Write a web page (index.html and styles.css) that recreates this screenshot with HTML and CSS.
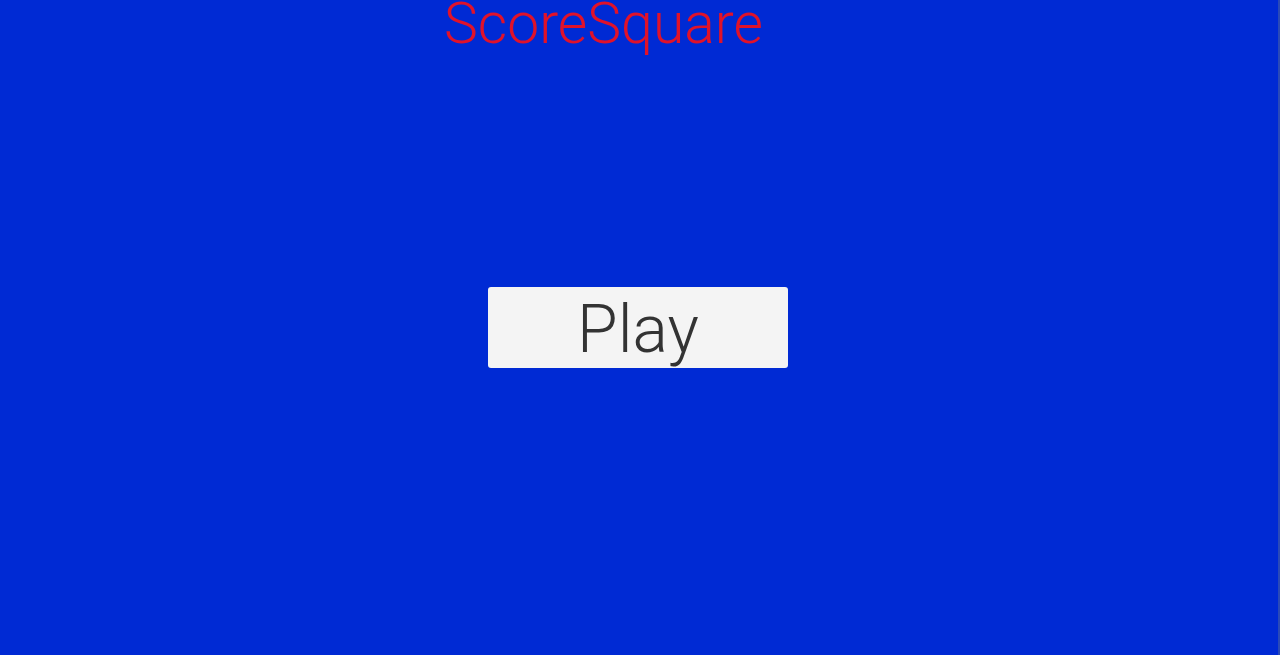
FILE: index.html
```html
<!DOCTYPE html>
<html>
<head>
<meta charset="utf-8">
<link rel="stylesheet" href="styles.css">
</head>
<body>
<div class="screen">
  <h1 class="title">ScoreSquare</h1>
  <div class="center">
    <button class="play">Play</button>
  </div>
</div>
</body>
</html>
```
FILE: styles.css
```css
html, body {
  margin: 0;
  padding: 0;
}
body {
  background: #002ad4;
  font-family: Roboto, "Liberation Sans", sans-serif;
}
.screen {
  height: 655px;
  display: flex;
  flex-direction: column;
  border-right: 2px solid #2a4ab8;
  box-sizing: border-box;
}
.title {
  margin: -9px 0 0 444px;
  font-size: 57px;
  font-weight: 300;
  color: #e0122a;
  line-height: 66px;
  height: 66px;
}
.center {
  flex: 1;
  display: flex;
  justify-content: center;
  align-items: flex-start;
  padding-top: 230px;
  padding-right: 2px;
}
.play {
  width: 300px;
  height: 81px;
  background: #f4f4f4;
  border: none;
  border-radius: 3px;
  font-family: Roboto, "Liberation Sans", sans-serif;
  font-weight: 300;
  font-size: 66px;
  color: #333;
  padding: 4px 0 0 0;
  line-height: 77px;
}
```
